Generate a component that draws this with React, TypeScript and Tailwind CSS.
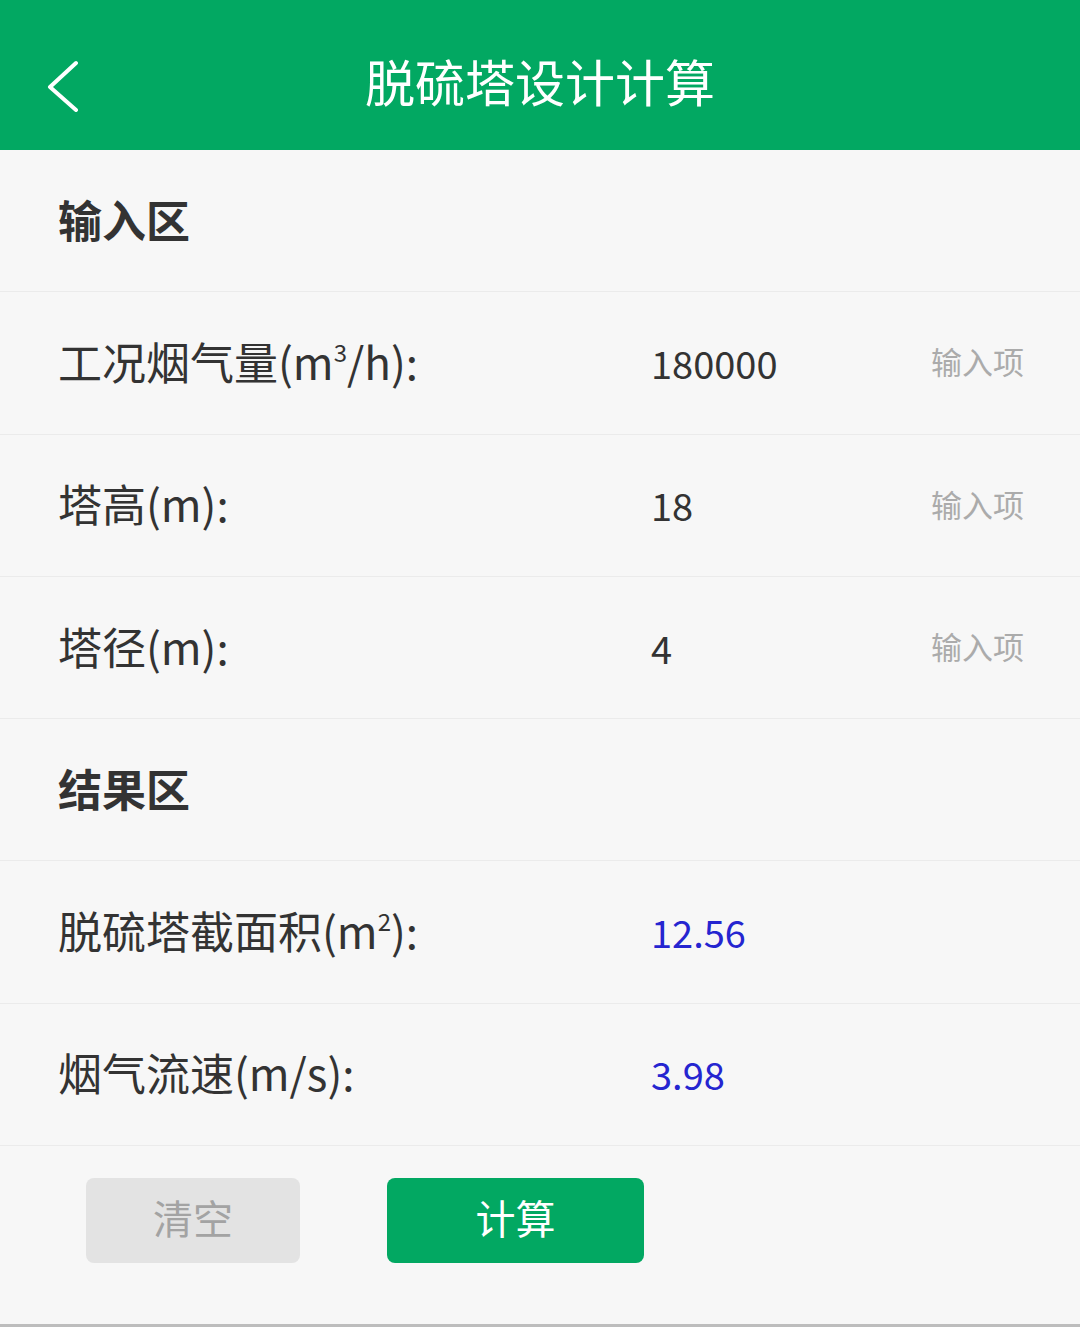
import React from 'react';

const font = { fontFamily: '"Noto Sans CJK SC", "Noto Sans", sans-serif' };

// ─── Rows ──────────────────────────────────────────────────────

function SectionRow({ title }: { title: string }) {
  return (
    <div className="flex items-center h-[142.3px] border-b border-[#ebebeb] px-[58px]">
      <span className="text-[44px] font-bold text-[#333] leading-none mb-[4px]">{title}</span>
    </div>
  );
}

interface FieldRowProps {
  label: React.ReactNode;
  value: string;
  result?: boolean;
  hint?: string;
}

function FieldRow({ label, value, result, hint }: FieldRowProps) {
  return (
    <div className="flex items-center h-[142.3px] border-b border-[#ebebeb] pl-[58px] pr-[56px]">
      <span className="w-[593px] text-[44px] text-[#333] leading-none mb-[4px]">{label}</span>
      <span
        className={`flex-1 text-[38px] leading-none ${result ? 'text-[#2525d0]' : 'text-[#333]'}`}
      >
        {value}
      </span>
      {hint && <span className="text-[31px] text-[#ababab] leading-none mb-[4px]">{hint}</span>}
    </div>
  );
}

function Sup({ children }: { children: React.ReactNode }) {
  return <sup className="text-[24px] top-[-18px]">{children}</sup>;
}

// ─── App ───────────────────────────────────────────────────────

export default function App() {
  return (
    <div className="w-[1080px] h-[1327px] bg-[#f7f7f7] flex flex-col overflow-hidden" style={font}>
      {/* Header */}
      <div className="relative h-[150px] bg-[#02a862] flex items-center justify-center shrink-0">
        <svg
          className="absolute left-[44px] top-[60px]"
          width="36"
          height="52"
          viewBox="0 0 36 52"
          fill="none"
        >
          <path d="M32 3 L6 27 L32 50" stroke="white" strokeWidth="4" strokeLinecap="round" strokeLinejoin="round" />
        </svg>
        <span className="text-[50px] text-white leading-none mt-[10px]">脱硫塔设计计算</span>
      </div>

      <SectionRow title="输入区" />
      <FieldRow
        label={
          <>
            工况烟气量(m<Sup>3</Sup>/h):
          </>
        }
        value="180000"
        hint="输入项"
      />
      <FieldRow label="塔高(m):" value="18" hint="输入项" />
      <FieldRow label="塔径(m):" value="4" hint="输入项" />

      <SectionRow title="结果区" />
      <FieldRow
        label={
          <>
            脱硫塔截面积(m<Sup>2</Sup>):
          </>
        }
        value="12.56"
        result
      />
      <FieldRow label="烟气流速(m/s):" value="3.98" result />

      {/* Actions */}
      <div className="flex items-start gap-[87px] pl-[86px] pt-[32px] flex-1">
        <button className="w-[214px] h-[85px] rounded-[8px] bg-[#e3e3e3] text-[#a3a3a3] text-[40px] leading-none pb-[8px] flex items-center justify-center">
          清空
        </button>
        <button className="w-[257px] h-[85px] rounded-[8px] bg-[#02a862] text-white text-[40px] leading-none pb-[8px] flex items-center justify-center">
          计算
        </button>
      </div>
      <div className="h-[3px] bg-[#bdbdbd] shrink-0" />
    </div>
  );
}
